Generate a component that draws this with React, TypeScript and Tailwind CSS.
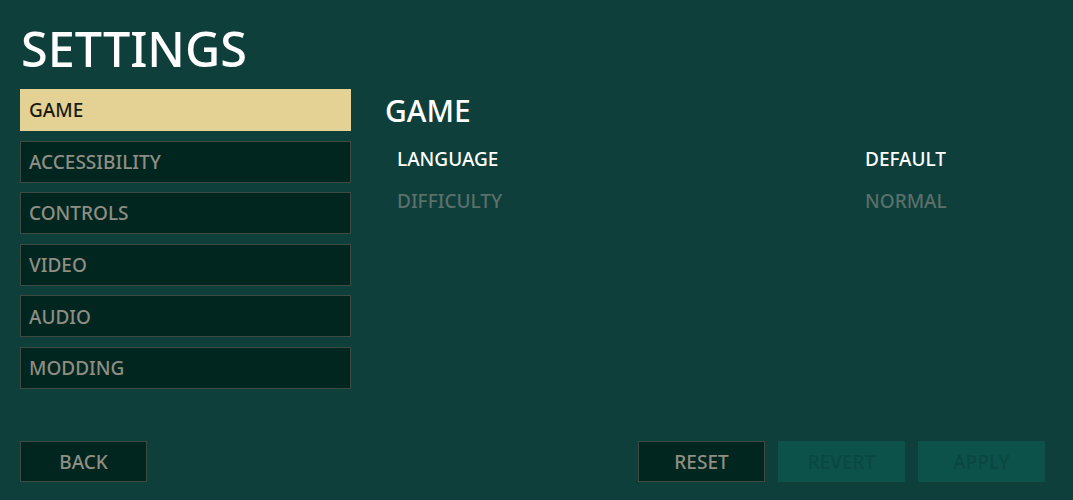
import { useState } from "react";

const tabs = ["GAME", "ACCESSIBILITY", "CONTROLS", "VIDEO", "AUDIO", "MODDING"];

const options = [
    { label: "LANGUAGE", value: "DEFAULT", enabled: true },
    { label: "DIFFICULTY", value: "NORMAL", enabled: false },
];

export default function App() {
    const [active, setActive] = useState("GAME");

    return (
        <div
            className="flex h-[500px] w-full flex-col bg-[#0e3f3a] pl-5 pr-7 pt-[18px] pb-[18px] font-medium"
            style={{ fontFamily: '"Noto Sans", "Open Sans", sans-serif' }}
        >
            <h1 className="pl-[1px] text-[48.5px] leading-[60px] text-white">SETTINGS</h1>

            <div className="mt-[11px] flex flex-1 gap-[34px]">
                {/* Tabs */}
                <div className="flex w-[331px] flex-col gap-[9.6px]">
                    {tabs.map((t) => (
                        <button
                            className={
                                t === active
                                    ? "h-[42px] border border-[#e3d293] bg-[#e3d293] px-2 pt-[1px] text-left text-[19px] text-[#1c1a10]"
                                    : "h-[42px] border border-[#3d4b43] bg-[#01261f] px-2 pt-[1px] text-left text-[19px] text-[#8f8e84]"
                            }
                            key={t}
                            onClick={() => setActive(t)}
                        >
                            {t}
                        </button>
                    ))}
                </div>

                {/* Panel */}
                <div className="flex-1">
                    <h2 className="text-[30px] leading-[44px] text-white">{active}</h2>
                    <div className="mt-[5px] flex flex-col pl-3 pr-[99px]">
                        {options.map((o) => (
                            <div
                                className={
                                    o.enabled
                                        ? "flex h-[42px] items-center justify-between text-[19px] text-white"
                                        : "flex h-[42px] items-center justify-between text-[19px] text-[#5b706b]"
                                }
                                key={o.label}
                            >
                                <span>{o.label}</span>
                                <span className="w-[81px]">{o.value}</span>
                            </div>
                        ))}
                    </div>
                </div>
            </div>

            {/* Bottom bar */}
            <div className="flex items-center justify-between">
                <button className="h-[41px] w-[127px] border border-[#3d4b43] bg-[#01261f] pt-[1px] text-[19px] text-[#8f8e84]">
                    BACK
                </button>
                <div className="flex gap-[13px]">
                    <button className="h-[41px] w-[127px] border border-[#3d4b43] bg-[#01261f] pt-[1px] text-[19px] text-[#8f8e84]">
                        RESET
                    </button>
                    <button
                        className="h-[41px] w-[127px] bg-[#0c524b] pt-[1px] text-[19px] text-[#0a4741]"
                        disabled
                    >
                        REVERT
                    </button>
                    <button
                        className="h-[41px] w-[127px] bg-[#0c524b] pt-[1px] text-[19px] text-[#0a4741]"
                        disabled
                    >
                        APPLY
                    </button>
                </div>
            </div>
        </div>
    );
}
